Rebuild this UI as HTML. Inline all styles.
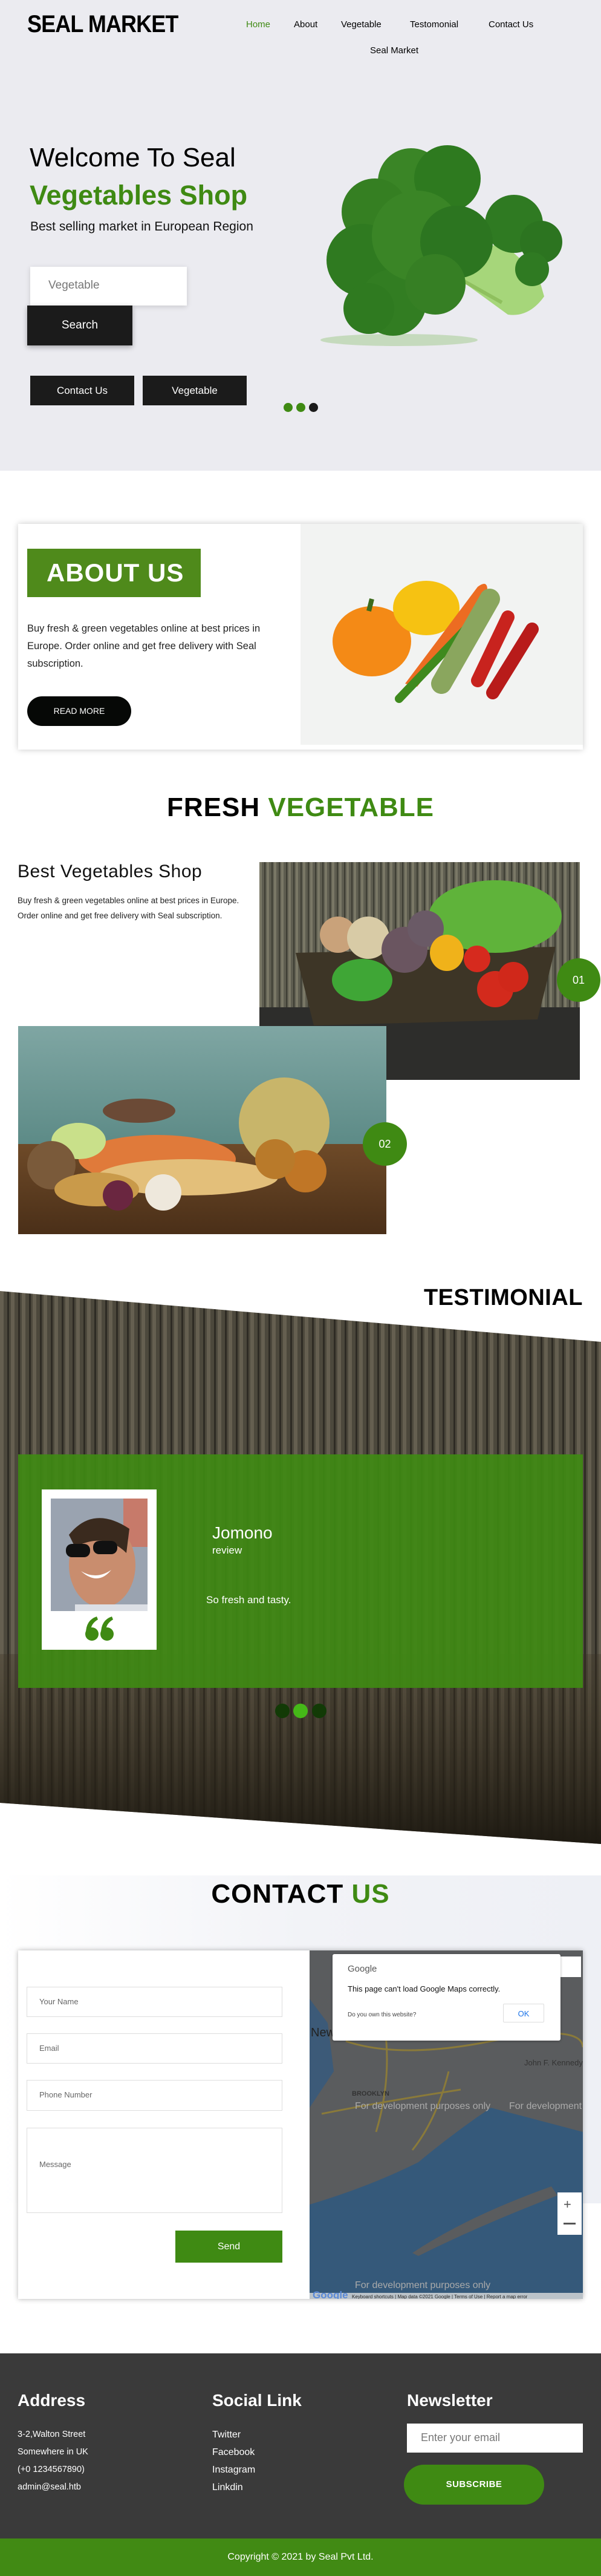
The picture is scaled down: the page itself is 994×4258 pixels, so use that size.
<!DOCTYPE html>
<html><head><meta charset="utf-8">
<style>
*{margin:0;padding:0;box-sizing:border-box}
body{width:994px;height:4258px;position:relative;font-family:"Liberation Sans",sans-serif;background:#fff;overflow:hidden}
.a{position:absolute}
.g{color:#3f8a13}
</style></head><body>

<!-- HERO -->
<div class="a" style="left:0;top:0;width:994px;height:778px;background:#ebebf0"></div>
<div class="a" style="left:45px;top:18px;font-size:40px;font-weight:bold;letter-spacing:-1px;transform:scaleX(.9);transform-origin:left;color:#000">SEAL MARKET</div>
<div class="a" style="left:407px;top:32px;font-size:15px;color:#3f8a13">Home</div>
<div class="a" style="left:486px;top:32px;font-size:15px">About</div>
<div class="a" style="left:564px;top:32px;font-size:15px">Vegetable</div>
<div class="a" style="left:678px;top:32px;font-size:15px">Testomonial</div>
<div class="a" style="left:808px;top:32px;font-size:15px">Contact Us</div>
<div class="a" style="left:612px;top:75px;font-size:15px">Seal Market</div>
<div class="a" style="left:49px;top:236px;font-size:44px;font-weight:300;color:#000">Welcome To Seal</div>
<div class="a g" style="left:49px;top:297px;font-size:45px;font-weight:bold">Vegetables Shop</div>
<div class="a" style="left:50px;top:363px;font-size:21px;color:#111">Best selling market in European Region</div>
<div class="a" style="left:50px;top:441px;width:259px;height:64px;background:#fff;box-shadow:0 2px 8px rgba(0,0,0,.15);font-size:19px;color:#777;padding:20px 0 0 30px">Vegetable</div>
<div class="a" style="left:45px;top:505px;width:174px;height:66px;background:#1b1b1b;color:#fff;font-size:19px;text-align:center;line-height:66px;box-shadow:0 3px 8px rgba(0,0,0,.3)">Search</div>
<div class="a" style="left:50px;top:621px;width:172px;height:49px;background:#1b1b1b;color:#fff;font-size:17px;text-align:center;line-height:49px">Contact Us</div>
<div class="a" style="left:236px;top:621px;width:172px;height:49px;background:#1b1b1b;color:#fff;font-size:17px;text-align:center;line-height:49px">Vegetable</div>
<div class="a" style="left:469px;top:666px;width:15px;height:15px;border-radius:50%;background:#3f8a13"></div>
<div class="a" style="left:490px;top:666px;width:15px;height:15px;border-radius:50%;background:#3f8a13"></div>
<div class="a" style="left:511px;top:666px;width:15px;height:15px;border-radius:50%;background:#1b1b1b"></div>
<svg class="a" style="left:510px;top:240px" width="420" height="340" viewBox="0 0 420 340">
<ellipse cx="150" cy="322" rx="130" ry="10" fill="#9fc98a" opacity=".5"/>
<path d="M220 200 L330 280 Q365 285 390 250 L380 215 L320 160 Z" fill="#a6d67a"/>
<path d="M240 215 L320 260" stroke="#8fc05e" stroke-width="6"/>
<circle cx="340" cy="130" r="48" fill="#2f7a22"/><circle cx="385" cy="160" r="35" fill="#2c7420"/><circle cx="370" cy="205" r="28" fill="#2f7a22"/>
<circle cx="170" cy="60" r="55" fill="#3a8526"/><circle cx="230" cy="55" r="55" fill="#2e7a1f"/><circle cx="110" cy="110" r="55" fill="#357f22"/>
<circle cx="90" cy="190" r="60" fill="#2f7a20"/><circle cx="140" cy="260" r="55" fill="#327d22"/><circle cx="180" cy="150" r="75" fill="#3a8526"/>
<circle cx="245" cy="160" r="60" fill="#2c7520"/><circle cx="210" cy="230" r="50" fill="#367f24"/><circle cx="100" cy="270" r="42" fill="#2f7a20"/>
</svg>

<!-- ABOUT -->
<div class="a" style="left:30px;top:866px;width:934px;height:373px;background:#fff;box-shadow:0 0 10px rgba(0,0,0,.22)"></div>
<div class="a" style="left:497px;top:866px;width:467px;height:365px;background:#f2f3f2"></div>
<svg class="a" style="left:540px;top:930px" width="400" height="250" viewBox="0 0 400 250">
<ellipse cx="75" cy="130" rx="65" ry="58" fill="#f48a16"/><path d="M70 80 l5 -20" stroke="#3d6b1c" stroke-width="8"/>
<ellipse cx="165" cy="75" rx="55" ry="45" fill="#f6c212"/>
<path d="M130 200 L250 40 Q270 25 265 55 L150 205 Z" fill="#ec6c22"/>
<path d="M120 225 L230 110" stroke="#3f8a1e" stroke-width="14" stroke-linecap="round"/>
<path d="M190 200 L270 60" stroke="#8aa65e" stroke-width="34" stroke-linecap="round"/>
<path d="M250 195 L300 90" stroke="#c8231e" stroke-width="22" stroke-linecap="round"/>
<path d="M275 215 L340 110" stroke="#b81b1a" stroke-width="22" stroke-linecap="round"/>
</svg>
<div class="a" style="left:45px;top:907px;width:287px;height:80px;background:#4f8a1b;color:#fff;font-size:42px;font-weight:bold;line-height:80px;padding-left:32px;letter-spacing:1px">ABOUT US</div>
<div class="a" style="left:45px;top:1025px;width:430px;font-size:16.5px;line-height:29px;color:#222">Buy fresh &amp; green vegetables online at best prices in Europe. Order online and get free delivery with Seal subscription.</div>
<div class="a" style="left:45px;top:1151px;width:172px;height:49px;border-radius:25px;background:#060806;color:#fff;font-size:14px;text-align:center;line-height:49px">READ MORE</div>

<!-- FRESH -->
<div class="a" style="left:0;top:1310px;width:994px;text-align:center;font-size:44px;font-weight:900;letter-spacing:1px">FRESH <span class="g">VEGETABLE</span></div>
<div class="a" style="left:29px;top:1424px;font-size:30px;color:#111;letter-spacing:.5px">Best Vegetables Shop</div>
<div class="a" style="left:29px;top:1476px;width:370px;font-size:13.5px;line-height:25px;color:#222">Buy fresh &amp; green vegetables online at best prices in Europe. Order online and get free delivery with Seal subscription.</div>
<svg class="a" style="left:429px;top:1425px" width="530" height="360" viewBox="0 0 530 360">
<defs><pattern id="fence" width="12" height="360" patternUnits="userSpaceOnUse"><rect width="12" height="360" fill="#5e5d50"/><rect width="4" height="360" fill="#7a7866"/><rect x="8" width="2" height="360" fill="#3e3e34"/></pattern></defs>
<rect width="530" height="360" fill="url(#fence)"/>
<rect y="240" width="530" height="120" fill="#2d2d2b"/>
<path d="M60 150 L490 140 L460 260 L90 270 Z" fill="#3d3526"/>
<ellipse cx="390" cy="90" rx="110" ry="60" fill="#5fb33a"/>
<circle cx="130" cy="120" r="30" fill="#c9a27a"/><circle cx="180" cy="125" r="35" fill="#d8cba6"/><circle cx="240" cy="145" r="38" fill="#6a5560"/>
<circle cx="275" cy="110" r="30" fill="#6a5a66"/><ellipse cx="310" cy="150" rx="28" ry="30" fill="#f0b21a"/>
<circle cx="360" cy="160" r="22" fill="#d62a1e"/><circle cx="390" cy="210" r="30" fill="#d32a1c"/><circle cx="420" cy="190" r="25" fill="#d0281a"/>
<ellipse cx="170" cy="195" rx="50" ry="35" fill="#3fa636"/>
</svg>
<div class="a" style="left:921px;top:1584px;width:72px;height:72px;border-radius:50%;background:#3f8a13;color:#fff;font-size:18px;text-align:center;line-height:72px">01</div>
<svg class="a" style="left:30px;top:1696px" width="609" height="344" viewBox="0 0 609 344">
<defs><linearGradient id="wall" x1="0" y1="0" x2="0" y2="1"><stop offset="0" stop-color="#7fa6a3"/><stop offset="1" stop-color="#5c8a86"/></linearGradient>
<linearGradient id="wood" x1="0" y1="0" x2="0" y2="1"><stop offset="0" stop-color="#6e4a28"/><stop offset="1" stop-color="#4a2f18"/></linearGradient></defs>
<rect width="609" height="200" fill="url(#wall)"/><rect y="195" width="609" height="149" fill="url(#wood)"/>
<ellipse cx="440" cy="160" rx="75" ry="75" fill="#c8b56a"/>
<ellipse cx="230" cy="220" rx="130" ry="40" fill="#e07a3a"/>
<ellipse cx="280" cy="250" rx="150" ry="30" fill="#e3bf7a"/>
<ellipse cx="100" cy="190" rx="45" ry="30" fill="#c9e08a"/>
<ellipse cx="55" cy="230" rx="40" ry="40" fill="#7a5a3a"/>
<ellipse cx="130" cy="270" rx="70" ry="28" fill="#c99a4a"/>
<circle cx="475" cy="240" r="35" fill="#c07626"/><circle cx="425" cy="220" r="33" fill="#b97a2a"/>
<circle cx="240" cy="275" r="30" fill="#eee8dc"/><circle cx="165" cy="280" r="25" fill="#6a2640"/>
<ellipse cx="200" cy="140" rx="60" ry="20" fill="#6b4a36"/>
</svg>
<div class="a" style="left:600px;top:1855px;width:73px;height:72px;border-radius:50%;background:#3f8a13;color:#fff;font-size:18px;text-align:center;line-height:72px">02</div>

<!-- TESTIMONIAL -->
<svg class="a" style="left:0;top:2134px" width="994" height="914" viewBox="0 0 994 914" preserveAspectRatio="none">
<defs><pattern id="f2" width="18" height="914" patternUnits="userSpaceOnUse"><rect width="18" height="914" fill="#4c483c"/><rect width="6" height="914" fill="#655f50"/><rect x="12" width="3" height="914" fill="#2e2b24"/></pattern>
<linearGradient id="dk" x1="0" y1="0" x2="0" y2="1"><stop offset="0" stop-color="#3a3020" stop-opacity=".3"/><stop offset="1" stop-color="#1e1a12"/></linearGradient></defs>
<polygon points="0,0 994,84 994,914 0,846" fill="url(#f2)"/>
<polygon points="0,600 994,600 994,914 0,846" fill="url(#dk)"/>
</svg>
<div class="a" style="left:0;top:2124px;width:964px;text-align:right;font-size:38px;font-weight:900;letter-spacing:.5px">TESTIMONIAL</div>
<div class="a" style="left:30px;top:2404px;width:934px;height:386px;background:rgba(63,138,19,.92)"></div>
<div class="a" style="left:69px;top:2462px;width:190px;height:265px;background:#fff"></div>
<svg class="a" style="left:84px;top:2477px" width="160" height="186" viewBox="0 0 160 186">
<rect width="160" height="186" fill="#9aa3b0"/><rect x="120" width="40" height="80" fill="#c77a6a"/>
<ellipse cx="85" cy="110" rx="55" ry="70" fill="#c98d6e"/>
<path d="M30 60 Q70 10 130 50 L125 90 Q90 55 40 80 Z" fill="#3a2a1e"/>
<rect x="25" y="75" width="40" height="22" rx="10" fill="#111"/><rect x="70" y="70" width="40" height="22" rx="10" fill="#111"/>
<path d="M50 120 Q75 135 100 118 Q78 145 50 120Z" fill="#fff"/>
<rect x="40" y="175" width="120" height="11" fill="#dcdfe5"/>
</svg>
<svg class="a" style="left:140px;top:2672px" width="50" height="42" viewBox="0 0 50 42">
<circle cx="12" cy="29" r="11" fill="#3f8a13"/><path d="M2 28 Q2 6 20 0 L22 5 Q10 12 10 24Z" fill="#3f8a13"/>
<circle cx="37" cy="29" r="11" fill="#3f8a13"/><path d="M27 28 Q27 6 45 0 L47 5 Q35 12 35 24Z" fill="#3f8a13"/>
</svg>
<div class="a" style="left:351px;top:2518px;font-size:28px;color:#fff">Jomono</div>
<div class="a" style="left:351px;top:2553px;font-size:17px;color:#fff">review</div>
<div class="a" style="left:341px;top:2635px;font-size:17px;color:#fff">So fresh and tasty.</div>
<div class="a" style="left:455px;top:2816px;width:24px;height:24px;border-radius:50%;background:#123a06"></div>
<div class="a" style="left:485px;top:2816px;width:24px;height:24px;border-radius:50%;background:#45b818"></div>
<div class="a" style="left:516px;top:2816px;width:24px;height:24px;border-radius:50%;background:#123a06"></div>

<!-- CONTACT -->
<div class="a" style="left:0;top:3100px;width:994px;height:542px;background:linear-gradient(90deg,#fff,#f2f3f7 50%,#eef0f5)"></div>
<div class="a" style="left:0;top:3106px;width:994px;text-align:center;font-size:44px;font-weight:900;letter-spacing:1px">CONTACT <span class="g">US</span></div>
<div class="a" style="left:30px;top:3224px;width:934px;height:576px;background:#fff;box-shadow:0 0 8px rgba(0,0,0,.3)"></div>
<div class="a" style="left:44px;top:3284px;width:423px;height:50px;border:1px solid #ddd;font-size:13px;color:#666;padding:16px 20px">Your Name</div>
<div class="a" style="left:44px;top:3361px;width:423px;height:50px;border:1px solid #ddd;font-size:13px;color:#666;padding:16px 20px">Email</div>
<div class="a" style="left:44px;top:3438px;width:423px;height:51px;border:1px solid #ddd;font-size:13px;color:#666;padding:16px 20px">Phone Number</div>
<div class="a" style="left:44px;top:3517px;width:423px;height:141px;border:1px solid #ddd;font-size:13px;color:#666;padding:52px 20px">Message</div>
<div class="a" style="left:290px;top:3687px;width:177px;height:53px;background:#3f8a13;color:#fff;font-size:16px;text-align:center;line-height:53px">Send</div>
<svg class="a" style="left:512px;top:3224px" width="452" height="576" viewBox="0 0 452 576">
<rect width="452" height="576" fill="#5a5c5e"/>
<path d="M0 80 L30 120 L40 200 L0 260Z" fill="#3c5a78"/>
<path d="M0 420 Q100 390 180 350 Q240 300 300 260 L452 300 L452 576 L0 576Z" fill="#35597a"/>
<path d="M170 500 Q260 440 400 390 L410 405 Q280 455 180 505Z" fill="#5a5c5e"/>
<path d="M60 150 Q150 180 300 150 T452 160 M120 100 Q140 200 110 300 M20 270 Q120 250 250 230 M230 200 Q210 280 170 330" stroke="#8a7a3a" stroke-width="3" fill="none"/>
<text x="2" y="142" font-size="20" fill="#222" font-family="Liberation Sans">New York</text>
<text x="70" y="240" font-size="11" fill="#333" font-family="Liberation Sans" font-weight="bold">BROOKLYN</text>
<text x="75" y="262" font-size="16" fill="#aaa" font-family="Liberation Sans">For development purposes only</text>
<text x="75" y="558" font-size="16" fill="#aaa" font-family="Liberation Sans">For development purposes only</text>
<text x="330" y="262" font-size="16" fill="#aaa" font-family="Liberation Sans">For development p</text>
<text x="355" y="190" font-size="13" fill="#333" font-family="Liberation Sans">John F. Kennedy</text>
<rect x="0" y="566" width="452" height="10" fill="#ddd" opacity=".8"/>
<text x="5" y="575" font-size="17" font-weight="bold" fill="#5a8ad8" font-family="Liberation Sans">Google</text>
<text x="70" y="575" font-size="8" fill="#222" font-family="Liberation Sans">Keyboard shortcuts | Map data ©2021 Google | Terms of Use | Report a map error</text>
<rect x="410" y="400" width="40" height="70" fill="#fff"/><text x="420" y="427" font-size="22" fill="#555">+</text><rect x="420" y="450" width="20" height="3" fill="#555"/>
<rect x="409" y="10" width="40" height="34" fill="#fff"/>
</svg>
<div class="a" style="left:550px;top:3230px;width:377px;height:143px;background:#fff;border-radius:3px;box-shadow:0 1px 4px rgba(0,0,0,.3)">
<div class="a" style="left:25px;top:16px;font-size:15px;color:#555">Google</div>
<div class="a" style="left:25px;top:50px;font-size:13px;color:#111">This page can't load Google Maps correctly.</div>
<div class="a" style="left:25px;top:95px;font-size:10px;color:#444">Do you own this website?</div>
<div class="a" style="left:282px;top:82px;width:68px;height:31px;border:1px solid #ddd;border-radius:2px;color:#1a73e8;font-size:13px;text-align:center;line-height:31px">OK</div>
</div>

<!-- FOOTER -->
<div class="a" style="left:0;top:3890px;width:994px;height:306px;background:#3a3a3a"></div>
<div class="a" style="left:29px;top:3952px;font-size:28px;font-weight:bold;color:#fff">Address</div>
<div class="a" style="left:351px;top:3952px;font-size:28px;font-weight:bold;color:#fff">Social Link</div>
<div class="a" style="left:673px;top:3952px;font-size:28px;font-weight:bold;color:#fff">Newsletter</div>
<div class="a" style="left:29px;top:4010px;font-size:14.5px;line-height:29px;color:#fff">3-2,Walton Street<br>Somewhere in UK<br>(+0 1234567890)<br>admin@seal.htb</div>
<div class="a" style="left:351px;top:4010px;font-size:16px;line-height:29px;color:#fff">Twitter<br>Facebook<br>Instagram<br>Linkdin</div>
<div class="a" style="left:673px;top:4006px;width:291px;height:48px;background:#fff;font-size:18px;color:#777;padding:13px 23px">Enter your email</div>
<div class="a" style="left:668px;top:4074px;width:232px;height:66px;border-radius:33px;background:#3f8a13;color:#fff;font-size:15px;font-weight:bold;text-align:center;line-height:66px;letter-spacing:.5px">SUBSCRIBE</div>
<div class="a" style="left:0;top:4196px;width:994px;height:62px;background:#418a14;color:#fff;font-size:16px;text-align:center;line-height:62px">Copyright © 2021 by Seal Pvt Ltd.</div>
</body></html>
